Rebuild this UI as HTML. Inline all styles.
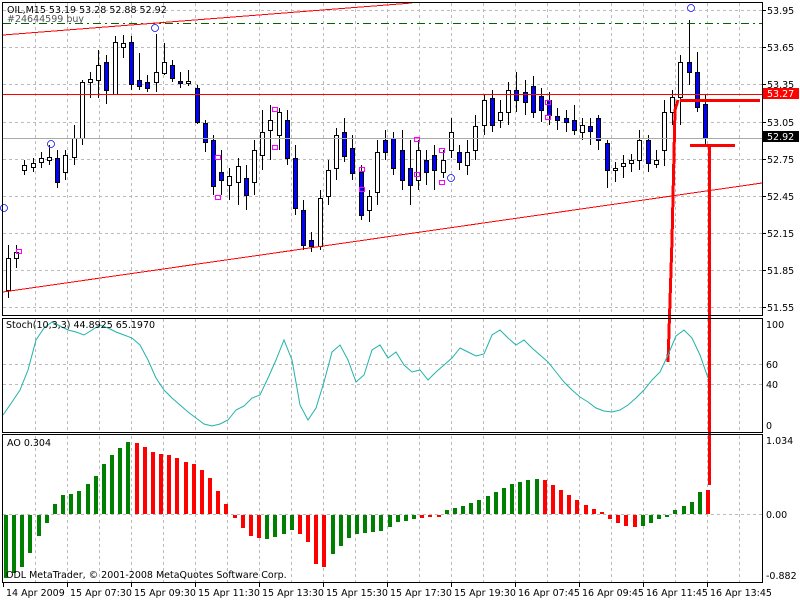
<!DOCTYPE html>
<html><head><meta charset="utf-8"><style>
html,body{margin:0;padding:0;background:#fff;width:800px;height:600px;overflow:hidden}
svg text{font-family:"DejaVu Sans","Liberation Sans",sans-serif;font-size:9.5px}
</style></head><body>
<svg id="s" width="800" height="600" xmlns="http://www.w3.org/2000/svg" shape-rendering="crispEdges"></svg>
<script>
var s=document.getElementById('s'),h='';
function L(x1,y1,x2,y2,c,w,d){h+='<line x1="'+x1+'" y1="'+y1+'" x2="'+x2+'" y2="'+y2+'" stroke="'+c+'" stroke-width="'+(w||1)+'"'+(d?' stroke-dasharray="'+d+'"':'')+'/>';}
function R(x,y,w,hh,f,st){h+='<rect x="'+x+'" y="'+y+'" width="'+w+'" height="'+hh+'" fill="'+f+'"'+(st?' stroke="'+st+'"':'')+'/>';}
function T(x,y,t,c,a){h+='<text x="'+x+'" y="'+y+'" fill="'+(c||'#000')+'"'+(a?' text-anchor="'+a+'"':'')+'>'+t+'</text>';}
for(var gx=35;gx<762;gx+=32){L(gx+.5,3,gx+.5,315,'#bbb',1,'3,3');L(gx+.5,319,gx+.5,432,'#bbb',1,'3,3');L(gx+.5,436,gx+.5,582,'#bbb',1,'3,3');}
var py=[10,47,84,122,159,196,233,270,307],pl=['53.95','53.65','53.35','53.05','52.75','52.45','52.15','51.85','51.55'];
for(var i=0;i<9;i++){L(3,py[i]+.5,762,py[i]+.5,'#bbb',1,'3,3');}
[364,384].forEach(function(y){L(3,y+.5,762,y+.5,'#bbb',1,'3,3')});
L(3,514.5,762,514.5,'#bbb',1,'3,3');
var C=[[290,258,245,298],[258,252,245,268],[170,165,160,175],[167,163,158,172],[162,158,152,168],[160,157,145,165],[158,182,150,188],[172,155,150,180],[157,138,125,165],[138,82,80,145],[82,79,72,98],[80,65,50,98],[62,90,55,104],[94,42,36,95],[47,43,35,58],[42,84,36,90],[80,86,53,90],[82,88,75,92],[82,72,34,92],[73,62,43,75],[65,78,60,82],[81,83,72,88],[83,81,70,86],[88,122,85,124],[123,142,120,152],[140,186,135,195],[172,180,150,195],[185,176,168,200],[182,166,158,205],[178,195,165,210],[182,150,140,195],[155,132,110,170],[130,120,105,160],[135,112,108,150],[120,158,110,165],[158,208,145,215],[210,245,200,250],[240,246,232,252],[246,198,190,250],[196,170,160,205],[168,135,128,180],[132,156,118,162],[148,173,135,180],[172,215,165,220],[210,196,190,222],[192,152,140,205],[140,152,130,160],[138,168,132,175],[150,180,130,190],[168,185,140,205],[180,150,140,190],[160,172,150,185],[155,170,145,190],[172,160,150,178],[150,132,118,158],[152,162,145,170],[165,152,140,175],[150,126,115,160],[125,100,95,135],[98,125,90,132],[120,112,100,128],[112,90,82,125],[90,100,72,112],[92,102,80,115],[86,112,76,118],[96,110,88,122],[100,115,92,125],[116,120,108,130],[118,122,110,132],[120,130,105,135],[132,125,118,140],[126,131,118,145],[118,140,115,150],[143,170,140,188],[170,168,162,182],[166,163,155,178],[163,160,154,172],[160,140,130,170],[140,163,135,172],[164,160,150,168],[150,112,100,166],[112,97,90,125],[97,62,55,125],[62,72,20,85],[72,107,52,112],[104,138,95,145]];
var cs=(705-8)/(C.length-1);
for(i=0;i<C.length;i++){var x=Math.round(6+cs*i),c=C[i];L(x+2.5,c[2],x+2.5,c[3],'#000');var t=Math.min(c[0],c[1]),b=Math.max(c[0],c[1]);if(b-t<2)b=t+2;
 R(x+.5,t+.5,4,b-t,c[1]<c[0]?'#fff':'#0000ff','#000');}
L(3,23.5,762,23.5,'#006400',1,'8,4,2,4');
L(3,94.5,762,94.5,'#ff0000',1);
L(3,138.5,762,138.5,'#aaa',1);
h+='<line x1="3" y1="35" x2="412" y2="3" stroke="#f00" stroke-width="1"/>';
h+='<line x1="3" y1="292" x2="762" y2="183" stroke="#f00" stroke-width="1"/>';
h+='<polyline points="668,362 672,240 675,110 678,100" fill="none" stroke="#f00" stroke-width="3"/>';
L(680,100.5,760,100.5,'#f00',3);L(690,145.5,735,145.5,'#f00',3);L(709.5,145,709.5,485,'#f00',3);
[[4,208],[51,144],[155,28],[691,8],[451,178]].forEach(function(m){h+='<circle cx="'+m[0]+'" cy="'+m[1]+'" r="3.5" fill="none" stroke="#44f"/>';});
[[218,158],[218,198],[275,110],[275,148],[19,252],[548,103],[548,118],[442,151],[442,183],[417,140],[417,175],[362,170],[362,190]].forEach(function(m){R(m[0]-2.5,m[1]-2.5,5,4,'none','#f0f');});
h+='<polyline points="3,415 12,402 20,390 28,370 36,340 44,328 52,322 60,326 68,330 76,332 84,335 92,330 100,325 108,328 116,332 124,335 132,338 140,345 148,360 156,378 164,390 172,398 180,405 188,412 196,418 204,424 212,426 220,424 228,420 236,410 244,406 252,398 260,395 268,378 276,360 284,340 292,360 300,405 308,420 316,408 324,382 332,352 340,345 348,360 356,382 364,375 372,350 380,345 388,358 396,352 404,365 412,372 420,370 428,380 436,372 444,365 452,358 460,348 468,352 476,356 484,354 492,335 500,330 508,338 516,345 524,340 532,348 540,355 548,362 556,372 564,382 572,390 580,397 588,402 596,408 604,411 612,412 620,410 628,405 636,398 644,390 652,380 660,372 668,355 676,336 684,330 692,338 700,355 708,378" fill="none" stroke="#20b2aa" stroke-width="1" shape-rendering="auto"/>';
var A=[[577,0],[572,0],[566,0],[552,0],[535,0],[522,0],[504,0],[495,0],[494,0],[491,0],[484,0],[476,0],[464,0],[455,0],[448,0],[442,0],[443,1],[447,1],[452,1],[454,1],[455,1],[458,1],[462,1],[464,1],[470,1],[478,1],[491,1],[504,1],[517,1],[527,1],[535,1],[537,1],[538,0],[536,0],[533,0],[529,0],[533,1],[541,1],[563,1],[566,1],[553,0],[545,0],[537,0],[533,0],[532,0],[531,0],[530,0],[526,0],[521,0],[520,0],[518,0],[517,1],[516,1],[514,1],[510,0],[508,0],[506,0],[503,0],[500,0],[496,0],[492,0],[488,0],[484,0],[482,0],[480,0],[479,0],[480,1],[485,1],[490,1],[495,1],[500,1],[505,1],[509,1],[512,1],[518,1],[522,1],[525,1],[526,1],[525,0],[522,0],[518,0],[515,0],[510,0],[506,0],[502,0],[492,0],[490,1]];
var as=(706-4)/(A.length-1);
for(i=0;i<A.length;i++){var x=Math.round(4+as*i),y=A[i][0];var col=A[i][1]?'#ff0000':'#008000';if(y<514)R(x,y,4,514-y,col);else R(x,515,4,Math.max(2,y-514),col);}
h+='<rect x="2.5" y="2.5" width="760" height="313" fill="none" stroke="#000"/>';
h+='<rect x="2.5" y="318.5" width="760" height="114" fill="none" stroke="#000"/>';
h+='<rect x="2.5" y="434.5" width="760" height="148" fill="none" stroke="#000"/>';
for(i=0;i<9;i++){L(762,py[i]+.5,766,py[i]+.5,'#000');T(767,py[i]+4,pl[i]);}
R(763,88,36,11,'#ff0000');T(767,97,'53.27','#fff');
R(763,131,36,11,'#000');T(767,140,'52.92','#fff');
T(766,328,'100');T(766,368,'60');T(766,388,'40');T(766,429,'0');
T(766,444,'1.034');T(766,518,'0.00');T(766,579,'-0.882');
var tl=[[3,'14 Apr 2009'],[67,'15 Apr 07:30'],[131,'15 Apr 09:30'],[195,'15 Apr 11:30'],[259,'15 Apr 13:30'],[323,'15 Apr 15:30'],[387,'15 Apr 17:30'],[451,'15 Apr 19:30'],[515,'16 Apr 07:45'],[579,'16 Apr 09:45'],[643,'16 Apr 11:45'],[707,'16 Apr 13:45']];
tl.forEach(function(t){L(t[0]+.5,583,t[0]+.5,587,'#000');T(t[0]+3,596,t[1]);});
T(7,13,'OIL,M15  53.19 53.28 52.88 52.92');T(7,22,'#24644599 buy','#555');
T(6,328,'Stoch(10,3,3) 44.8925 65.1970');T(7,446,'AO 0.304');
T(6,578,'ODL MetaTrader, © 2001-2008 MetaQuotes Software Corp.');
s.innerHTML=h;
</script>
</body></html>
